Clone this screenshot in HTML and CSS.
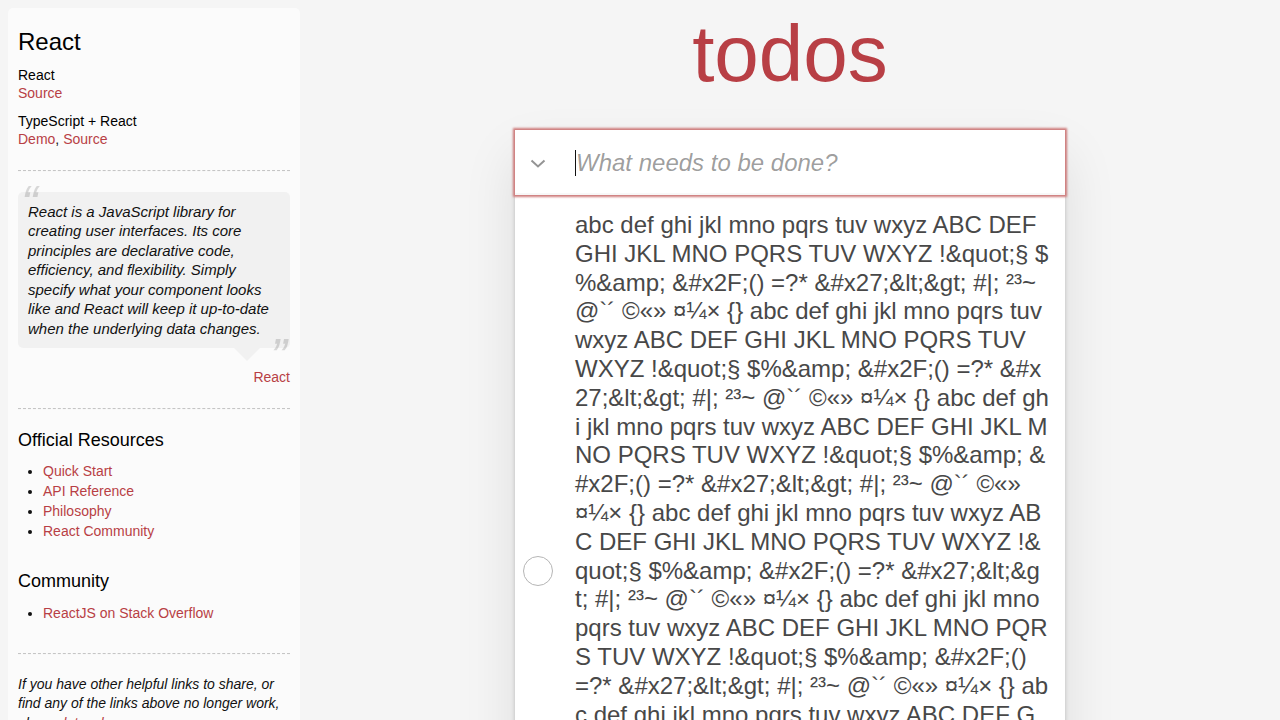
FILE: index.html
```html
<!DOCTYPE html>
<html lang="en">
<head>
<meta charset="utf-8">
<title>React • TodoMVC</title>
<link rel="stylesheet" href="styles.css">
</head>
<body>
<div class="page">
  <aside class="learn">
    <header class="learn-header">
      <h3>React</h3>
      <h5>React</h5>
      <a href="#">Source</a><br>
      <h5>TypeScript + React</h5>
      <a href="#">Demo</a>, <a href="#">Source</a>
    </header>
    <hr>
    <div class="quote">
      <blockquote class="speech-bubble">
        <p>React is a JavaScript library for creating user interfaces. Its core principles are declarative code, efficiency, and flexibility. Simply specify what your component looks like and React will keep it up-to-date when the underlying data changes.</p>
      </blockquote>
      <div class="quote-footer"><a href="#">React</a></div>
    </div>
    <hr>
    <h4>Official Resources</h4>
    <ul>
      <li><a href="#">Quick Start</a></li>
      <li><a href="#">API Reference</a></li>
      <li><a href="#">Philosophy</a></li>
      <li><a href="#">React Community</a></li>
    </ul>
    <h4>Community</h4>
    <ul>
      <li><a href="#">ReactJS on Stack Overflow</a></li>
    </ul>
    <footer class="learn-footer">
      <hr>
      <em>If you have other helpful links to share, or find any of the links above no longer work, please <a href="#">let us know</a>.</em>
    </footer>
  </aside>

  <main class="content">
    <section class="todoapp">
      <h1>todos</h1>
      <div class="card">
        <div class="new-row">
          <label class="toggle-all" for="new-todo">
            <svg width="16" height="9" viewBox="0 0 16 9"><polyline points="1.5,1.5 8,7.5 14.5,1.5" fill="none" stroke="#949494" stroke-width="2"/></svg>
          </label>
          <input id="new-todo" class="new-todo" placeholder="What needs to be done?">
        </div>
        <ul class="todo-list">
          <li class="todo">
            <span class="toggle">
              <svg width="30" height="30" viewBox="0 0 30 30"><circle cx="15" cy="15" r="14.5" fill="none" stroke="#b5b5b5" stroke-width="1"/></svg>
            </span>
            <label class="todo-text">abc def ghi jkl mno pqrs tuv wxyz ABC DEF GHI JKL MNO PQRS TUV WXYZ !&amp;quot;§ $%&amp;amp; &amp;#x2F;() =?* &amp;#x27;&amp;lt;&amp;gt; #|; ²³~ @`´ ©«» ¤¼× {} abc def ghi jkl mno pqrs tuv wxyz ABC DEF GHI JKL MNO PQRS TUV WXYZ !&amp;quot;§ $%&amp;amp; &amp;#x2F;() =?* &amp;#x27;&amp;lt;&amp;gt; #|; ²³~ @`´ ©«» ¤¼× {} abc def ghi jkl mno pqrs tuv wxyz ABC DEF GHI JKL MNO PQRS TUV WXYZ !&amp;quot;§ $%&amp;amp; &amp;#x2F;() =?* &amp;#x27;&amp;lt;&amp;gt; #|; ²³~ @`´ ©«» ¤¼× {} abc def ghi jkl mno pqrs tuv wxyz ABC DEF GHI JKL MNO PQRS TUV WXYZ !&amp;quot;§ $%&amp;amp; &amp;#x2F;() =?* &amp;#x27;&amp;lt;&amp;gt; #|; ²³~ @`´ ©«» ¤¼× {} abc def ghi jkl mno pqrs tuv wxyz ABC DEF GHI JKL MNO PQRS TUV WXYZ !&amp;quot;§ $%&amp;amp; &amp;#x2F;() =?* &amp;#x27;&amp;lt;&amp;gt; #|; ²³~ @`´ ©«» ¤¼× {} abc def ghi jkl mno pqrs tuv wxyz ABC DEF GHI JKL MNO PQRS TUV WXYZ !&amp;quot;§ $%&amp;amp; &amp;#x2F;() =?* &amp;#x27;&amp;lt;&amp;gt; #|; ²³~ @`´ ©«» ¤¼× {} abc def ghi jkl mno pqrs tuv wxyz ABC DEF GHI JKL MNO PQRS TUV WXYZ !&amp;quot;§ $%&amp;amp; &amp;#x2F;() =?* &amp;#x27;&amp;lt;&amp;gt; #|; ²³~ @`´ ©«» ¤¼× {} abc def ghi jkl mno pqrs tuv wxyz ABC DEF GHI JKL</label>
          </li>
        </ul>
      </div>
    </section>
  </main>
</div>
</body>
</html>
```

FILE: styles.css
```css
html, body {
  margin: 0;
  padding: 0;
}

body {
  font: 14px "Liberation Sans", Arial, Helvetica, sans-serif;
  line-height: 1.4em;
  background: #f5f5f5;
  color: #111111;
  font-weight: 300;
}

.page {
  display: flex;
  align-items: flex-start;
}

/* ---------- Sidebar ---------- */
.learn {
  flex: 0 0 auto;
  width: 272px;
  margin: 8px 0 0 8px;
  padding: 10px;
  border-radius: 5px;
  background-color: rgba(255, 255, 255, 0.6);
}

.learn a {
  font-weight: normal;
  text-decoration: none;
  color: #b83f45;
}

.learn h3,
.learn h4,
.learn h5 {
  margin: 10px 0;
  font-weight: 500;
  line-height: 1.2;
  color: #000;
}

.learn h3 {
  font-size: 24px;
}

.learn h4 {
  font-size: 18px;
}

.learn h5 {
  margin-bottom: 0;
  font-size: 14px;
}

.learn ul {
  padding: 0;
  margin: 0 0 30px 25px;
}

.learn li {
  line-height: 20px;
}

.learn p {
  font-size: 15px;
  font-weight: 300;
  line-height: 1.3;
  margin: 0;
}

.learn hr {
  margin: 20px 0;
  border: 0;
  border-top: 1px dashed #c5c5c5;
  border-bottom: 1px dashed #f7f7f7;
}

.quote {
  margin: 20px 0 0;
}

.speech-bubble {
  position: relative;
  margin: 0;
  padding: 10px;
  background: rgba(0, 0, 0, 0.04);
  border-radius: 5px;
}

.speech-bubble::after {
  content: "";
  position: absolute;
  top: 100%;
  right: 30px;
  border: 13px solid transparent;
  border-top-color: rgba(0, 0, 0, 0.04);
}

.speech-bubble p {
  font-style: italic;
}

.speech-bubble p::before {
  content: "\201C";
  font-size: 50px;
  opacity: 0.15;
  position: absolute;
  top: -20px;
  left: 3px;
}

.speech-bubble p::after {
  content: "\201D";
  font-size: 50px;
  opacity: 0.15;
  position: absolute;
  bottom: -42px;
  right: 3px;
}

.quote-footer {
  padding-top: 20px;
  text-align: right;
}

.learn-footer em {
  font-style: italic;
}

/* ---------- Main ---------- */
.content {
  flex: 1 1 auto;
  min-width: 0;
}

.todoapp {
  width: 550px;
  margin: 0 auto 40px;
}

.todoapp h1 {
  margin: 14px 0 36px;
  font-size: 80px;
  line-height: 80px;
  font-weight: 200;
  text-align: center;
  color: #b83f45;
}

.card {
  background: #fff;
  box-shadow: 0 2px 4px 0 rgba(0, 0, 0, 0.2), 0 25px 50px 0 rgba(0, 0, 0, 0.1);
}

.new-row {
  position: relative;
  z-index: 3;
  display: flex;
  align-items: center;
  height: 65px;
  background: #fff;
  box-shadow: 0 0 2px 2px #cf7d7d, inset 0 -2px 1px rgba(0, 0, 0, 0.03);
}

.toggle-all {
  flex: 0 0 45px;
  height: 65px;
  display: flex;
  align-items: center;
  justify-content: flex-start;
  padding-left: 15px;
  box-sizing: border-box;
}

.toggle-all svg {
  display: block;
  margin-top: 2px;
}

.new-todo {
  flex: 1 1 auto;
  min-width: 0;
  height: 65px;
  margin: 0;
  padding: 16px 16px 16px 16px;
  box-sizing: border-box;
  border: none;
  outline: none;
  background: linear-gradient(#111, #111) no-repeat 15px 20px / 1px 26px;
  font-family: inherit;
  font-size: 24px;
  font-weight: inherit;
  line-height: 1.4em;
  color: inherit;
}

.new-todo::placeholder {
  font-style: italic;
  font-weight: 400;
  color: rgba(0, 0, 0, 0.4);
}

.todo-list {
  margin: 0;
  padding: 0;
  list-style: none;
  border-top: 1px solid #e6e6e6;
}

.todo {
  display: flex;
  align-items: center;
  font-size: 24px;
  border-bottom: 1px solid #ededed;
}

.toggle {
  flex: 0 0 45px;
  display: flex;
  align-items: center;
  padding-left: 8px;
  box-sizing: border-box;
}

.toggle svg {
  display: block;
}

.todo-text {
  flex: 1 1 auto;
  min-width: 0;
  display: block;
  padding: 15px 15px 15px 15px;
  word-break: break-all;
  line-height: 1.2;
  font-weight: 400;
  color: #484848;
}
```
